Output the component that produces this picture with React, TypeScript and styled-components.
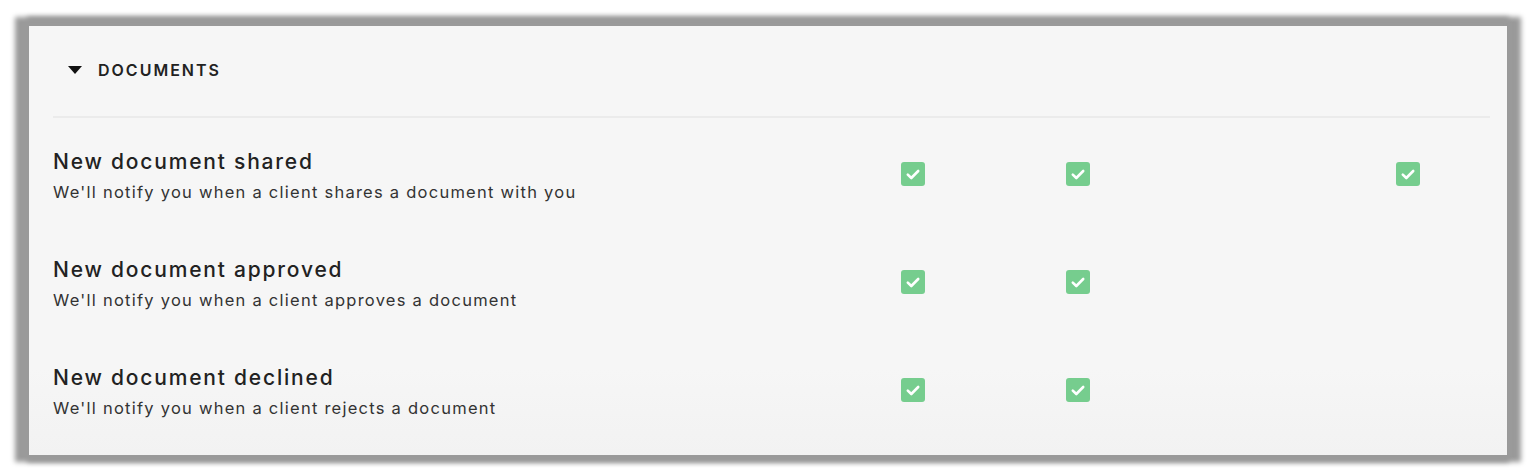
import styled, { createGlobalStyle } from "styled-components";

const GlobalStyle = createGlobalStyle`
  * {
    box-sizing: border-box;
  }

  body {
    margin: 0;
    background: #ffffff;
    font-family: "Inter", "Noto Sans", sans-serif;
    color: #222222;
  }
`;

interface NotificationRow {
  title: string;
  description: string;
  checks: boolean[];
}

const rows: NotificationRow[] = [
  {
    title: "New document shared",
    description: "We'll notify you when a client shares a document with you",
    checks: [true, true, false, true],
  },
  {
    title: "New document approved",
    description: "We'll notify you when a client approves a document",
    checks: [true, true, false, false],
  },
  {
    title: "New document declined",
    description: "We'll notify you when a client rejects a document",
    checks: [true, true, false, false],
  },
];

function CheckBox() {
  return (
    <Box>
      <svg width="24" height="24" viewBox="0 0 24 24" fill="none">
        <path
          d="M6.8 12.6L10.3 16L17.2 9"
          stroke="#ffffff"
          strokeWidth="2.6"
          strokeLinecap="round"
          strokeLinejoin="round"
        />
      </svg>
    </Box>
  );
}

function App() {
  return (
    <>
      <GlobalStyle />
      <Page>
        <Panel>
          <Header>
            <Caret />
            <HeaderTitle>DOCUMENTS</HeaderTitle>
          </Header>
          {rows.map((row) => (
            <Row key={row.title}>
              <Label>
                <Title>{row.title}</Title>
                <Description>{row.description}</Description>
              </Label>
              {row.checks.map((checked, i) => (
                <Cell key={i}>{checked && <CheckBox />}</Cell>
              ))}
            </Row>
          ))}
        </Panel>
      </Page>
    </>
  );
}

export default App;

const Page = styled.div`
  width: 1538px;
  height: 474px;
  padding: 26px 31px 0 29px;
`;

const Panel = styled.section`
  height: 429px;
  background: linear-gradient(#f6f6f6 80%, #f2f2f2);
  padding: 0 17px 0 24px;
  box-shadow: -6px -1px 5px 8px #9a9a9a, 6px -1px 5px 8px #9a9a9a;
`;

const Header = styled.div`
  display: flex;
  align-items: center;
  gap: 16px;
  height: 92px;
  padding: 0 0 2px 15px;
  border-bottom: 2px solid #ebebeb;
`;

const Caret = styled.span`
  width: 0;
  height: 0;
  border-left: 7px solid transparent;
  border-right: 7px solid transparent;
  border-top: 8px solid #111111;
`;

const HeaderTitle = styled.h2`
  margin: 0;
  font-size: 16px;
  font-weight: 600;
  letter-spacing: 2px;
  color: #222222;
`;

const Row = styled.div`
  display: grid;
  grid-template-columns: 1fr repeat(4, 165px);
  align-items: center;
  height: 108px;
  padding-top: 3px;
`;

const Label = styled.div`
  display: flex;
  flex-direction: column;
  padding-top: 4px;
`;

const Title = styled.div`
  font-size: 21px;
  line-height: 32px;
  font-weight: 500;
  letter-spacing: 1.8px;
  color: #222222;
`;

const Description = styled.div`
  font-size: 16.5px;
  line-height: 28px;
  font-weight: 400;
  letter-spacing: 1.25px;
  color: #333333;
`;

const Cell = styled.div`
  display: flex;
  justify-content: center;
`;

const Box = styled.div`
  width: 24px;
  height: 24px;
  border-radius: 3px;
  background: #76cd8e;
  display: flex;
`;
